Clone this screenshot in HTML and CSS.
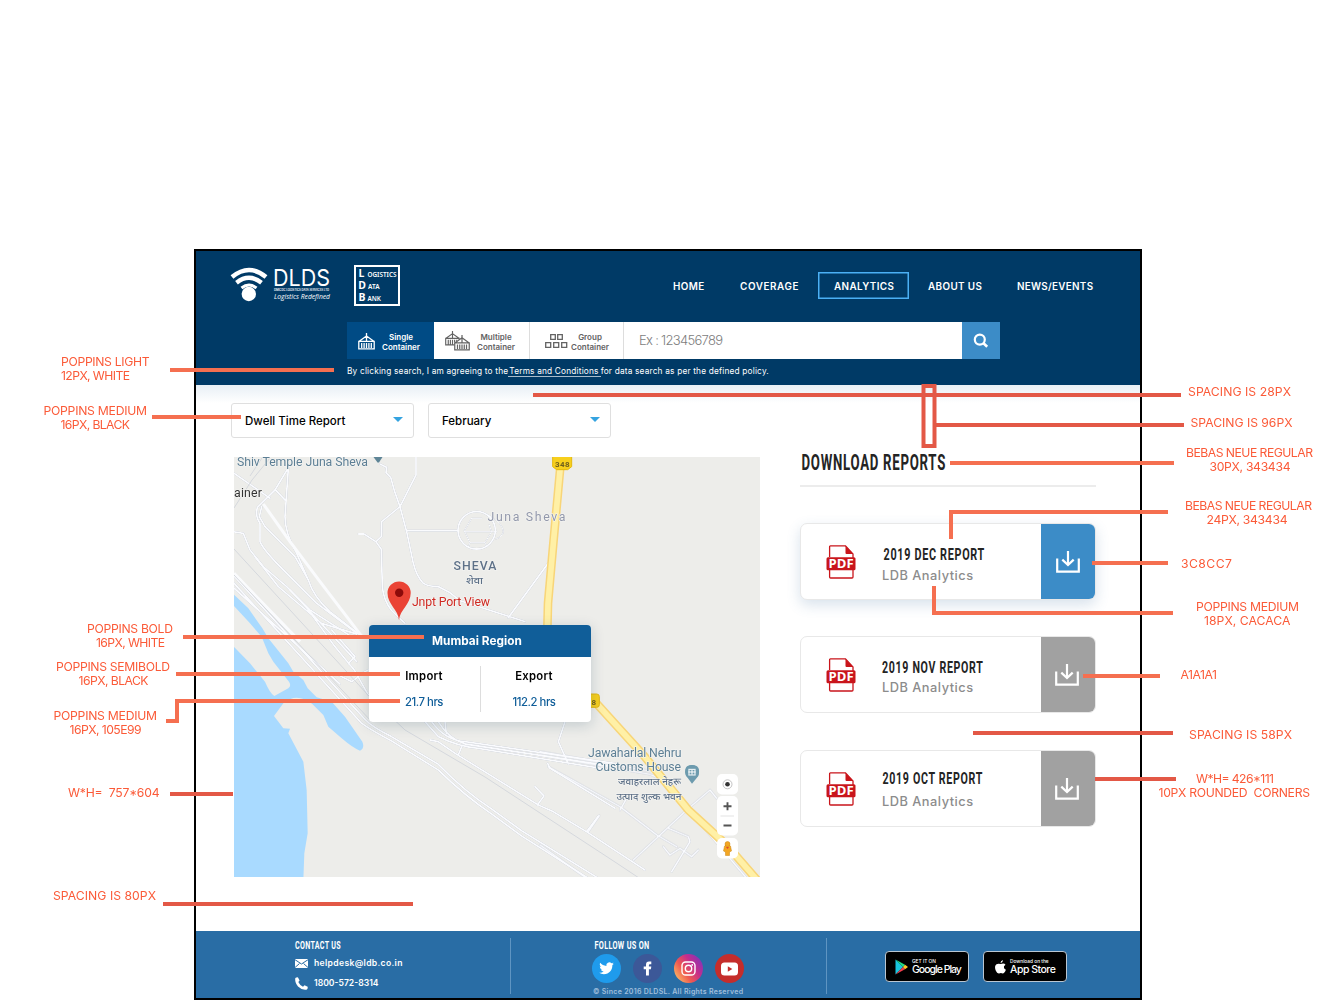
FILE: index.html
```html
<!DOCTYPE html>
<html lang="en">
<head>
<meta charset="utf-8">
<title>LDB Analytics</title>
<link rel="stylesheet" href="styles.css">
</head>
<body>
<svg class="defs" width="0" height="0" aria-hidden="true">
  <defs>
    <symbol id="pdf" viewBox="0 0 30 34">
      <path d="M3.6 12V1.7Q3.6.9 4.4.9H19.5L27 9v23Q27 33 26 33H4.6Q3.6 33 3.6 32V25" fill="#fff" stroke="#c9151b" stroke-width="1.3"/>
      <path d="M19.5.8 27 9H20.5Q19.5 9 19.5 8Z" fill="#c9151b"/>
      <rect x=".5" y="12.3" width="29" height="13" rx="1.5" fill="#c9151b"/>
      <text x="2.6" y="23.2" textLength="25" lengthAdjust="spacingAndGlyphs" class="pdf-text">PDF</text>
    </symbol>
    <symbol id="download" viewBox="0 0 24 22">
      <path d="M1.2 7.5V20.7H22.8V7.5M12 0V13.6M6.3 8.6 12 14 17.7 8.6" fill="none" stroke="#fff" stroke-width="2.2"/>
    </symbol>
    <symbol id="crate" viewBox="0 0 17 17">
      <path d="M8.5 0V4M8.5 3 1.2 8.2M8.5 3 15.8 8.2M8.5 3V8M.8 8.3H16.2V15.8H.8ZM3.7 10V15M6.1 10V15M8.5 10V15M10.9 10V15M13.3 10V15" fill="none" stroke="currentColor" stroke-width="1.3"/>
    </symbol>
    <linearGradient id="insta" x1="0" y1=".85" x2="1" y2=".15">
      <stop offset="0" stop-color="#fdc468"/><stop offset=".35" stop-color="#ef5a4f"/><stop offset=".65" stop-color="#c42d8c"/><stop offset="1" stop-color="#7a35c0"/>
    </linearGradient>
  </defs>
</svg>

<div class="frame">
  <header class="header">
    <div class="topbar">
      <svg class="dlds" viewBox="231 267 100 36">
        <g fill="none" stroke="#fff" stroke-width="4.4">
          <path d="M232 277Q249 263 266 277"/>
          <path d="M236.500 282.700Q249 273 261.500 282.700"/>
          <path d="M241.500 288Q249 282 256.500 288" stroke-width="3"/>
        </g>
        <circle cx="248.800" cy="294" r="7.200" fill="#fff"/>
        <text x="273" y="286" textLength="57" lengthAdjust="spacingAndGlyphs" class="dlds-name">DLDS</text>
        <text x="274" y="291" textLength="55" lengthAdjust="spacingAndGlyphs" class="dlds-sub">DMICDC LOGISTICS DATA SERVICES LTD</text>
        <text x="274" y="299" textLength="56" lengthAdjust="spacingAndGlyphs" class="dlds-tag">Logistics Redefined</text>
      </svg>
      <svg class="ldb" viewBox="354 265 46 41">
        <rect x="355" y="266" width="44" height="39" fill="none" stroke="#fff" stroke-width="2"/>
        <g class="ldb-big"><text x="358.500" y="277.300">L</text><text x="358.300" y="289.300">D</text><text x="358.500" y="300.800">B</text></g>
        <g class="ldb-small">
          <text x="367.500" y="277.300" textLength="29" lengthAdjust="spacingAndGlyphs">OGISTICS</text>
          <text x="368" y="289.300" textLength="11.500" lengthAdjust="spacingAndGlyphs">ATA</text>
          <text x="367.500" y="300.800" textLength="13.500" lengthAdjust="spacingAndGlyphs">ANK</text>
        </g>
      </svg>
      <nav class="nav">
        <a class="nav-home">HOME</a><a class="nav-coverage">COVERAGE</a><a class="nav-analytics active">ANALYTICS</a><a class="nav-about">ABOUT US</a><a class="nav-news">NEWS/EVENTS</a>
      </nav>
    </div>
    <div class="search">
      <div class="tab tab-single"><svg width="17" height="17"><use href="#crate"/></svg><span>Single<br>Container</span></div>
      <div class="tab tab-multi"><svg width="26" height="21"><use href="#crate" width="15" height="15"/><rect x="9.500" y="11.500" width="16" height="9" fill="#fff"/><path d="M9 12 17 6 25 12Z" fill="#fff"/><use href="#crate" x="9" y="4" width="16" height="16"/></svg><span>Multiple<br>Container</span></div>
      <div class="tab tab-group"><svg width="23" height="15" viewBox="0 0 23 15"><path d="M5.700.7h4.600v4.600H5.700ZM12.700.7h4.600v4.600H12.700ZM.7 8.700h5v4.600h-5ZM8.700 8.700h5v4.600h-5ZM16.700 8.700h5v4.600h-5Z" fill="none" stroke="currentColor" stroke-width="1.300"/></svg><span>Group<br>Container</span></div>
      <div class="field">Ex : 123456789</div>
      <div class="go"><svg width="16" height="16" viewBox="0 0 16 16"><circle cx="6.800" cy="6.600" r="5" fill="none" stroke="#fff" stroke-width="2.200"/><path d="M10.500 10.300 14.200 13.800" stroke="#fff" stroke-width="2.600"/></svg></div>
    </div>
    <p class="terms"><span>By clicking search, I am agreeing to the</span><u>Terms and Conditions</u><span>for data search as per the defined policy.</span></p>
  </header>

  <main class="main">
    <section class="left">
      <div class="selects">
        <div class="select">Dwell Time Report<i></i></div>
        <div class="select">February<i></i></div>
      </div>
      <div class="map">
        <svg class="map-art" viewBox="234 457 526 420">
          <g transform="translate(225 560) scale(.33333)">
            <path class="water" d="M20 97 28 105 70 145 112 205 130 235 190 310 205 335 235 360 248 385 275 412 320 425 360 470 412 545Q420 565 405 572 385 565 350 535L310 500 295 465 262 432Q215 395 175 430L147 468 175 505 195 506 190 520 235 605 245 690 248 820 238 880 235 960H20V255L28 262 75 310 120 365Q135 400 148 408L190 385Q200 378 192 365L145 305 130 280 110 230 75 190 20 130Z"/>
          </g>
          <g class="road">
            <g transform="translate(220 390) scale(.33333)">
              <path d="M480 222 500 232 498 248 512 262 524 305 540 350 560 425 580 520Q590 560 610 580 625 590 655 590L690 608 720 632 915 695M588 195V255L540 350 485 395 484 440 468 455 432 432H416M468 455 484 478 487 590Q490 630 515 662L555 700M560 422H714M988 515 865 683M210 225 165 300 112 352Q105 380 120 400V455Q130 480 190 540L290 640 410 730M205 235 195 380Q195 430 230 490L265 570Q280 620 330 665L420 735M165 298 195 330M42 250 150 325M38 425 70 430 90 480 130 530 200 590 270 660 395 740M125 350 118 380 135 410 225 500 265 570"/>
              <path class="thin" d="M755 385 733 422 750 458H795L815 425 808 405M733 425H830M755 385H785M750 458 745 472M795 458 800 470M805 375Q850 400 850 425 848 440 828 447"/>
              <circle cx="770" cy="421" r="56"/>
            </g>
            <g transform="translate(225 560) scale(.33333)">
              <path d="M20 40 420 478Q440 500 500 530L640 613Q720 695 800 747L890 812 1120 955M20 62 410 490Q440 512 500 543L640 630Q720 708 800 762L890 828 1090 955M20 78 345 372M90 -10 160 80 290 190 395 222M320 210 390 290 370 310 385 325 430 405M250 150 330 260 400 345 430 330M195 90 395 305M340 345 380 365 400 350M600 485 640 530Q700 560 760 565L1170 632M620 485 Q660 540 720 545L1170 610M640 485Q670 535 720 552L1170 620M615 540 640 545 690 580 940 735 985 755 1085 815 1260 930M710 560 700 585M930 680 957 708 937 735M1120 768 1085 815M1020 485 1000 545 1030 612M968 610 975 625 1170 745M660 485 664 520"/>
            </g>
            <g transform="translate(540 450) scale(.33333)">
              <path d="M0 915 330 973M0 905 330 963M335 975 370 990 620 1285M25 950 240 1070 350 1155 410 1190M240 1080 260 1045M280 1230 440 1080 510 1020 530 1045M385 1135 445 1160 450 1175 395 1265M370 1190 390 1215 420 1195 455 1220 475 1200M145 1145 178 1097M0 1185 140 1285"/>
            </g>
          </g>
          <g fill="none" stroke="#fafbfd">
            <g transform="translate(220 390) scale(.33333)" stroke-width="9"><path d="M130 342 210 455 300 575 430 745M42 550 240 755"/></g>
            <g stroke="#d5d8dd" stroke-width="1"><path d="M234 549 368 695 405 730 485 777 615 862 645 882M270 458 252 480 234 508M262 458 250 476M234 575 372 722"/></g>
          </g>
          <g transform="translate(540 450) scale(.33333)" fill="none">
            <path class="hw-edge" d="M62 40 40 280 24 460 22 540M160 750 310 915 400 1025 445 1080 560 1185 660 1300"/>
            <path class="hw" d="M62 40 40 280 24 460 22 540M160 750 310 915 400 1025 445 1080 560 1185 660 1300"/>
            <path d="M38 15H95V50L83 59H50L38 50Z" fill="#f7cf1d" stroke="#e5b90b" stroke-width="3"/>
            <rect x="120" y="732" width="58" height="40" rx="8" fill="#f7cf1d" stroke="#dfb514" stroke-width="3"/>
            <path d="M456 1001 439 978Q428 945 456 945 484 945 475 978Z" fill="#6d9bae"/>
            <circle cx="456" cy="966" r="21" fill="#6d9bae"/><path d="M445 958H467M445 966H467M447 960V974M456 960V974M465 960V974M445 975H467" stroke="#fff" stroke-width="3"/>
          </g>
          <path d="M373.500 457H382.500L379 462.500H377.500Z" fill="#5f8597"/>
          <g class="label">
            <text x="237" y="466" textLength="131" class="slate">Shiv Temple Juna Sheva</text>
            <text x="234" y="497" textLength="28" fill="#333">ainer</text>
            <text x="487.500" y="521" textLength="78" class="light">Juna Sheva</text>
            <text x="453.500" y="570" textLength="43" class="area">SHEVA</text>
            <text x="466" y="584" textLength="17" lengthAdjust="spacingAndGlyphs" class="hindi">शेवा</text>
            <text x="412" y="606" textLength="78" fill="#cf2a23">Jnpt Port View</text>
            <text x="588" y="757" textLength="93.500" class="slate">Jawaharlal Nehru</text>
            <text x="595.500" y="771" textLength="85.500" class="slate">Customs House</text>
            <text x="618" y="784.500" textLength="63" lengthAdjust="spacingAndGlyphs" class="hindi">जवाहरलाल नेहरू</text>
            <text x="616.500" y="800" textLength="65" lengthAdjust="spacingAndGlyphs" class="hindi">उत्पाद शुल्क भवन</text>
          </g>
          <text x="555" y="466.500" textLength="14.500" class="shield">348</text>
          <text x="591.500" y="704.500" class="shield">8</text>
          <path d="M399 620C398.300 610 387.500 604 387.500 593A11.600 11.600 0 0 1 410.700 593C410.700 604 399.800 610 399 620Z" fill="#ea4335"/>
          <circle cx="399.200" cy="592.700" r="4.200" fill="#8c0a0a"/>
          <g fill="#fff"><rect x="717" y="774" width="21" height="20.500" rx="5"/><rect x="717" y="796" width="21" height="39.500" rx="5"/><rect x="717" y="838" width="21" height="20.500" rx="5"/></g>
          <circle cx="727.500" cy="784.300" r="4.500" fill="none" stroke="#aaa" stroke-width=".7"/><circle cx="727.500" cy="784.300" r="2.300" fill="#333"/>
          <path d="M723.500 806.200H731.500M727.500 802.200V810.200M723.500 825.500H731.500" stroke="#555" stroke-width="1.900"/><path d="M720.500 816H734" stroke="#e3e3e3"/>
          <path d="M724.500 846Q727.500 843 730.500 846L731.500 851 729.500 852V855.500H725.500V852L723.500 851Z" fill="#f3a623" stroke="#c98714" stroke-width=".5"/><circle cx="727.500" cy="844" r="2.500" fill="#f3a623" stroke="#c98714" stroke-width=".5"/><path d="M726 847H729L727.500 849Z" fill="#e2482d"/>
        </svg>
        <div class="popup">
          <h2>Mumbai Region</h2>
          <div class="stats">
            <div class="stat"><b>Import</b><span>21.7 hrs</span></div>
            <div class="stat"><b>Export</b><span>112.2 hrs</span></div>
          </div>
        </div>
      </div>
    </section>

    <aside class="reports">
      <div class="reports-head"><svg width="148" height="24"><text x="1.500" y="20.500" textLength="144.500" lengthAdjust="spacingAndGlyphs" class="bebas bebas-lg">DOWNLOAD REPORTS</text></svg></div>
      <article class="card card-on">
        <svg class="pdf"><use href="#pdf"/></svg>
        <div class="card-text"><svg width="110" height="18"><text x="1.500" y="15.500" textLength="101.500" lengthAdjust="spacingAndGlyphs" class="bebas">2019 DEC REPORT</text></svg><span>LDB Analytics</span></div>
        <div class="dl"><svg width="24" height="22"><use href="#download"/></svg></div>
      </article>
      <article class="card">
        <svg class="pdf"><use href="#pdf"/></svg>
        <div class="card-text"><svg width="110" height="18"><text x="0" y="15.500" textLength="101.500" lengthAdjust="spacingAndGlyphs" class="bebas">2019 NOV REPORT</text></svg><span>LDB Analytics</span></div>
        <div class="dl"><svg width="24" height="22"><use href="#download"/></svg></div>
      </article>
      <article class="card card-loose">
        <svg class="pdf"><use href="#pdf"/></svg>
        <div class="card-text"><svg width="110" height="18"><text x=".5" y="15.500" textLength="100.500" lengthAdjust="spacingAndGlyphs" class="bebas">2019 OCT REPORT</text></svg><span>LDB Analytics</span></div>
        <div class="dl"><svg width="24" height="22"><use href="#download"/></svg></div>
      </article>
    </aside>
  </main>

  <footer class="footer">
    <div class="contact">
      <svg width="60" height="12"><text x="0" y="10" textLength="46" lengthAdjust="spacingAndGlyphs" class="bebas bebas-sm">CONTACT US</text></svg>
      <div class="line"><svg width="13" height="9" viewBox="0 0 13 9"><rect width="13" height="9" fill="#fff"/><path d="M0 .7 6.500 5 13 .7M0 8.500 4.500 4.500M13 8.500 8.500 4.500" fill="none" stroke="#296da5"/></svg><span class="mail">helpdesk@ldb.co.in</span></div>
      <div class="line"><svg width="13" height="13" viewBox="0 0 13 13"><path d="M.3 1Q2 0 3 .4L4.600 3.500 3.300 5Q5 8.500 8 9.700L9.500 8.200 12.700 9.700Q13 11.500 12 12.500 7 13.500 3 9.500-.5 5.500.3 1Z" fill="#fff"/></svg><span class="phone">1800-572-8314</span></div>
    </div>
    <div class="follow">
      <svg width="60" height="12"><text x="2.500" y="10" textLength="55" lengthAdjust="spacingAndGlyphs" class="bebas bebas-sm">FOLLOW US ON</text></svg>
      <div class="social">
        <svg viewBox="0 0 29 29"><circle cx="14.500" cy="14.500" r="14.500" fill="#1f9bec"/><path transform="translate(7.200 6.900) scale(.61)" fill="#fff" d="M23.950 4.570a10 10 0 0 1-2.820.78 4.960 4.960 0 0 0 2.160-2.730c-.95.560-2 .960-3.130 1.190a4.920 4.920 0 0 0-8.380 4.480C7.690 8.100 4.070 6.130 1.640 3.160a4.820 4.820 0 0 0-.67 2.480c0 1.710.87 3.210 2.190 4.100a4.900 4.900 0 0 1-2.230-.62v.06a4.920 4.920 0 0 0 3.950 4.830 5 5 0 0 1-2.210.08 4.940 4.940 0 0 0 4.600 3.420A9.870 9.870 0 0 1 0 19.540a13.990 13.990 0 0 0 7.550 2.210c9.050 0 14-7.500 14-13.980 0-.21 0-.42-.02-.63a9.940 9.940 0 0 0 2.460-2.550z"/></svg>
        <svg viewBox="0 0 29 29"><circle cx="14.500" cy="14.500" r="14.500" fill="#3c5898"/><path d="M13 21.500V15.300H10.700V12.500H13V10.700Q13 7.600 16 7.600H18.300V10.200H16.800Q15.900 10.200 15.900 11.200V12.500H18.300L17.900 15.300H15.900V21.500Z" fill="#fff"/></svg>
        <svg viewBox="0 0 29 29"><circle cx="14.500" cy="14.500" r="14.500" fill="url(#insta)"/><rect x="8" y="8" width="13" height="13" rx="3.600" fill="none" stroke="#fff" stroke-width="1.400"/><circle cx="14.500" cy="14.500" r="3.200" fill="none" stroke="#fff" stroke-width="1.400"/><circle cx="18.200" cy="10.900" r=".9" fill="#fff"/></svg>
        <svg viewBox="0 0 29 29"><circle cx="14.500" cy="14.500" r="14.500" fill="#c52d2b"/><rect x="6" y="8.500" width="17" height="13" rx="3.500" fill="#fff"/><path d="M12.800 12.300V17.700L17.300 15Z" fill="#c52d2b"/></svg>
      </div>
      <p class="copy">© Since 2016 DLDSL. All Rights Reserved</p>
    </div>
    <div class="stores">
      <div class="store"><svg width="13" height="16" viewBox="0 0 13 16"><path d="M.5.500V15.500L8 8Z" fill="#18c6df"/><path d="M.5.500 8 8 10 5.800Z" fill="#22dc84"/><path d="M.5 15.500 8 8 10 10.200Z" fill="#ef3d4c"/><path d="M10 5.800 13 8 10 10.200 8 8Z" fill="#ffc928"/></svg><div><small class="get">GET IT ON</small><strong class="gp">Google Play</strong></div></div>
      <div class="store apple"><svg width="11" height="14" viewBox="0 0 11 14"><path d="M8 0Q8 2.500 5.500 3.200 5.400 1 8 0ZM5.600 4.100Q9 2.400 10.500 4.700 8.200 6.200 9 8 9.500 9.200 10.900 9.700 9.400 13.500 7.700 13.500 6 12.700 4 13.500 2 13.500.5 10-.8 6 1.500 4.300 3.200 3.200 5.600 4.100Z" fill="#fff"/></svg><div><small class="get">Download on the</small><strong class="as">App Store</strong></div></div>
    </div>
  </footer>
</div>

<svg class="notes" viewBox="0 0 1336 1000">
  <g class="rule-a">
    <path d="M170 370H334M152 417H241M183 637H424M176 674H400M166 721H177V701H400M950 463H1174M951 539V512H1168M1092 563H1168M934 586V613H1173M1083 676H1160"/>
  </g>
  <g class="rule-b">
    <path d="M533 395H1181M936 425H1184M973 733H1173M1095 779H1176M170 794H233M163 904H413"/><rect x="923.500" y="386" width="11" height="60"/>
  </g>
  <g class="note">
    <text x="61" y="366" textLength="88.500">POPPINS LIGHT</text><text x="61" y="380" textLength="69">12PX, WHITE</text>
    <text x="43.500" y="415" textLength="103.500">POPPINS MEDIUM</text><text x="60.500" y="429" textLength="69.500">16PX, BLACK</text>
    <text x="87" y="633" textLength="86">POPPINS BOLD</text><text x="96" y="647" textLength="69">16PX, WHITE</text>
    <text x="56" y="671" textLength="114">POPPINS SEMIBOLD</text><text x="78.500" y="685" textLength="70">16PX, BLACK</text>
    <text x="53.500" y="720" textLength="103.500">POPPINS MEDIUM</text><text x="69.500" y="734" textLength="72">16PX, 105E99</text>
    <text x="68" y="797" textLength="91.500" xml:space="preserve">W*H=  757*604</text>
    <text x="53" y="900" textLength="103">SPACING IS 80PX</text>
    <text x="1188" y="396" textLength="103">SPACING IS 28PX</text><text x="1190.500" y="427" textLength="102">SPACING IS 96PX</text>
    <text x="1186" y="457" textLength="127">BEBAS NEUE REGULAR</text><text x="1209.500" y="471" textLength="81">30PX, 343434</text>
    <text x="1185" y="510" textLength="127">BEBAS NEUE REGULAR</text><text x="1206.500" y="524" textLength="81">24PX, 343434</text>
    <text x="1181" y="568" textLength="51">3C8CC7</text>
    <text x="1196" y="611" textLength="103">POPPINS MEDIUM</text><text x="1204" y="625" textLength="86.500">18PX, CACACA</text>
    <text x="1180.500" y="679" textLength="36.500">A1A1A1</text>
    <text x="1189" y="739" textLength="103">SPACING IS 58PX</text>
    <text x="1196" y="783" textLength="78">W*H= 426*111</text><text x="1158.500" y="797" textLength="151.500" xml:space="preserve">10PX ROUNDED  CORNERS</text>
  </g>
</svg>
</body>
</html>
```

FILE: styles.css
```css
* { box-sizing: border-box; }
body { margin: 0; background: #fff; width: 1336px; height: 1000px; overflow: hidden; position: relative; font-family: Inter, "Open Sans", sans-serif; }
svg { display: block; flex: none; overflow: visible; }
.defs { position: absolute; }
h2, p { margin: 0; }

.frame { margin: 249px 0 0 194px; width: 948px; height: 751px; border: 2px solid #000; display: flex; flex-direction: column; background: #fff; }

.header { height: 134px; background: #003a66; color: #fff; flex: none; }
.topbar { height: 71px; padding: 14px 47px 0 35px; display: flex; align-items: flex-start; }
.dlds { width: 100px; height: 36px; margin-top: 2px; }
.ldb { width: 46px; height: 41px; margin-left: 23px; }
.dlds-name { font: 400 23px Inter, sans-serif; fill: #fff; }
.dlds-sub { font: 600 3px Inter, sans-serif; fill: #fff; }
.dlds-tag { font: italic 7.500px "Open Sans", sans-serif; fill: #fff; }
.ldb-big { font: 700 10.5px "Noto Sans", sans-serif; fill: #fff; }
.ldb-small { font: 600 7px "Noto Sans", sans-serif; fill: #fff; }

.nav { display: flex; margin-left: auto; margin-top: 7px; font-weight: 600; font-size: 9.900px; line-height: 28px; letter-spacing: .38px; white-space: nowrap; }
.nav a { height: 27px; }
.nav-home { width: 67px; }
.nav-coverage { width: 78px; letter-spacing: .6px; }
.nav-analytics { width: 91px; margin-right: 19px; }
.nav-about { width: 89px; }
.nav-news { width: 76px; letter-spacing: .28px; }
.nav .active { box-shadow: inset 0 0 0 1.500px #4bb0f5; padding-left: 16px; }

.search { margin-left: 151px; width: 653px; height: 37px; display: flex; background: #fff; }
.tab { display: flex; align-items: center; color: #636363; font-weight: 600; font-size: 8px; line-height: 10px; text-align: center; border-right: 1px solid #ddd; white-space: nowrap; padding-top: 2px; }
.tab-single { width: 87px; background: #004b85; color: #fff; padding-left: 11px; gap: 7px; border: 0; }
.tab-multi { width: 96px; padding-left: 11px; gap: 6px; }
.tab-group { width: 94px; padding-left: 15px; gap: 3px; }
.field { flex: 1; padding-left: 15px; font-weight: 300; font-size: 13px; line-height: 37px; color: #7d7d7d; letter-spacing: -.7px; }
.go { width: 38px; background: #3c8cc7; display: flex; align-items: center; justify-content: center; }
.terms { margin: 6px 0 0 151px; display: flex; font-size: 8.300px; line-height: 13px; white-space: nowrap; letter-spacing: .18px; }
.terms u { text-decoration: none; border-bottom: 1px solid #a9bccb; padding: 0 2px 0 1px; height: 12px; }

.main { flex: 1; display: flex; background: linear-gradient(#e8eff5, #fff 18px); }
.left { padding: 18px 0 0 35px; width: 604px; }
.selects { display: flex; gap: 14px; }
.select { width: 183px; height: 35px; border: 1.500px solid #dfdfdf; border-radius: 3px; background: #fff; display: flex; align-items: center; justify-content: space-between; padding: 0 10px 0 13px; font-size: 11.500px; font-weight: 500; color: #000; }
.select i { border: 5px solid transparent; border-top-color: #35a3e0; border-bottom: 0; margin-bottom: 2px; }
.map { position: relative; margin: 19px 0 0 3px; width: 526px; height: 420px; background: #ededea; }
.map-art { width: 526px; height: 420px; overflow: hidden; }
.water { fill: #a9daff; }
.road { fill: none; stroke: #fafbfe; stroke-width: 5.500; stroke-linejoin: round; stroke-linecap: round; filter: drop-shadow(0 0 .7px #a6adbb); }
.thin { stroke-width: 3; }
.hw-edge { stroke: #f8d578; stroke-width: 26; }
.hw { stroke: #fff0a6; stroke-width: 17; }
.label { font: 400 12.300px Roboto, sans-serif; paint-order: stroke; stroke: #f5f5f3; stroke-width: 1.200px; }
.slate { fill: #5d7f95; }
.light { fill: #9298ab; }
.area { fill: #5e7188; font-weight: 500; }
.hindi { fill: #5e7188; font: 500 10px "Noto Sans Devanagari", "Noto Sans", sans-serif; }
.shield { font: 700 8px Roboto, sans-serif; fill: #70601c; }

.popup { position: absolute; left: 135px; top: 168px; width: 222px; height: 97px; background: #fff; border-radius: 4px; box-shadow: 0 3px 14px rgba(20, 60, 90, .2); overflow: hidden; }
.popup h2 { height: 32px; background: #105e99; color: #fff; font-size: 11.800px; line-height: 32px; font-weight: 700; text-align: center; padding-right: 6px; letter-spacing: .05px; }
.stats { display: flex; padding-top: 9px; }
.stat { width: 111px; height: 46px; display: flex; flex-direction: column; align-items: center; font-size: 11.300px; line-height: 20px; gap: 6px; color: #000; padding-right: 1px; }
.stat + .stat { border-left: 1.500px solid #ddd; padding-right: 4px; }
.stat b { font-weight: 600; letter-spacing: .3px; }
.stat span { color: #105e99; font-weight: 500; letter-spacing: -.45px; }

.reports { width: 296px; display: flex; flex-direction: column; gap: 36px; }
.reports-head { height: 102px; padding-top: 64px; border-bottom: 2px solid #ececec; }
.bebas { font: 700 17.300px Roboto, sans-serif; fill: #242424; letter-spacing: 1.100px; }
.bebas-lg { font-size: 21.800px; letter-spacing: 1.200px; }
.bebas-sm { font-size: 11.500px; fill: #fff; letter-spacing: .5px; }
.card { height: 77px; flex: none; border: 1.500px solid #e8e8e8; border-radius: 7px; background: #fff; display: flex; overflow: hidden; }
.card-on { box-shadow: 0 5px 14px rgba(60, 110, 160, .2); }
.pdf { width: 30px; height: 34px; margin: 21px 0 0 25px; }
.pdf-text { font: 700 11.500px "Open Sans", sans-serif; fill: #fff; letter-spacing: 0; }
.card-text { margin: 20px 0 0 26px; flex: 1; }
.card-text span { display: block; font-size: 12.800px; line-height: 18px; margin-top: 4px; font-weight: 500; color: #8c8c8c; letter-spacing: .5px; white-space: nowrap; }
.card-on .card-text span { margin-top: 5px; }
.card-loose { margin-top: 1px; }
.card-loose .card-text { margin-top: 17px; }
.card-loose .card-text span { margin-top: 7px; }
.dl { width: 55px; background: #a1a1a1; margin: -1px; padding: 28px 0 0 14px; height: 77px; }
.card-on .dl { background: #3c8cc7; padding-left: 15px; }

.footer { height: 67px; background: #296da5; color: #fff; display: flex; flex: none; }
.contact { width: 315px; margin: 7px 0 4px; padding: 1px 0 0 99px; border-right: 1px solid #5f95c2; }
.line { display: flex; align-items: center; gap: 6px; height: 20px; font-size: 8.600px; font-weight: 600; }
.mail { letter-spacing: .33px; }
.contact > svg { margin-bottom: 2px; }
.follow { width: 316px; margin: 7px 0 4px; padding: 1px 0 0 81px; border-right: 1px solid #5f95c2; }
.social { display: flex; gap: 12px; margin-top: 3px; }
.social svg { width: 29px; height: 29px; }
.copy { font-size: 7px; line-height: 9px; font-weight: 600; color: #a0bfdc; margin: 4px 0 0 1px; white-space: nowrap; letter-spacing: .29px; }
.stores { display: flex; gap: 14px; padding: 20px 0 0 58px; }
.store { width: 84px; height: 31px; background: #000; border: 1px solid #b9c6d2; border-radius: 4px; display: flex; align-items: center; gap: 4px; padding-left: 9px; white-space: nowrap; }
.store.apple { padding-left: 11px; }
.store div { display: flex; flex-direction: column; }
.get { font-size: 4.800px; line-height: 6px; font-weight: 500; }
.gp, .as { font-size: 10.500px; line-height: 12px; font-weight: 500; }
.gp { letter-spacing: -1px; }
.as { letter-spacing: -.5px; }

.notes { position: absolute; left: 0; top: 0; width: 1336px; height: 1000px; }
.rule-a { fill: none; stroke: #f56f50; stroke-width: 4; }
.rule-b { fill: none; stroke: #e35846; stroke-width: 4; }
.note { font: 400 12.200px Inter, sans-serif; fill: #fb5a38; }
```
